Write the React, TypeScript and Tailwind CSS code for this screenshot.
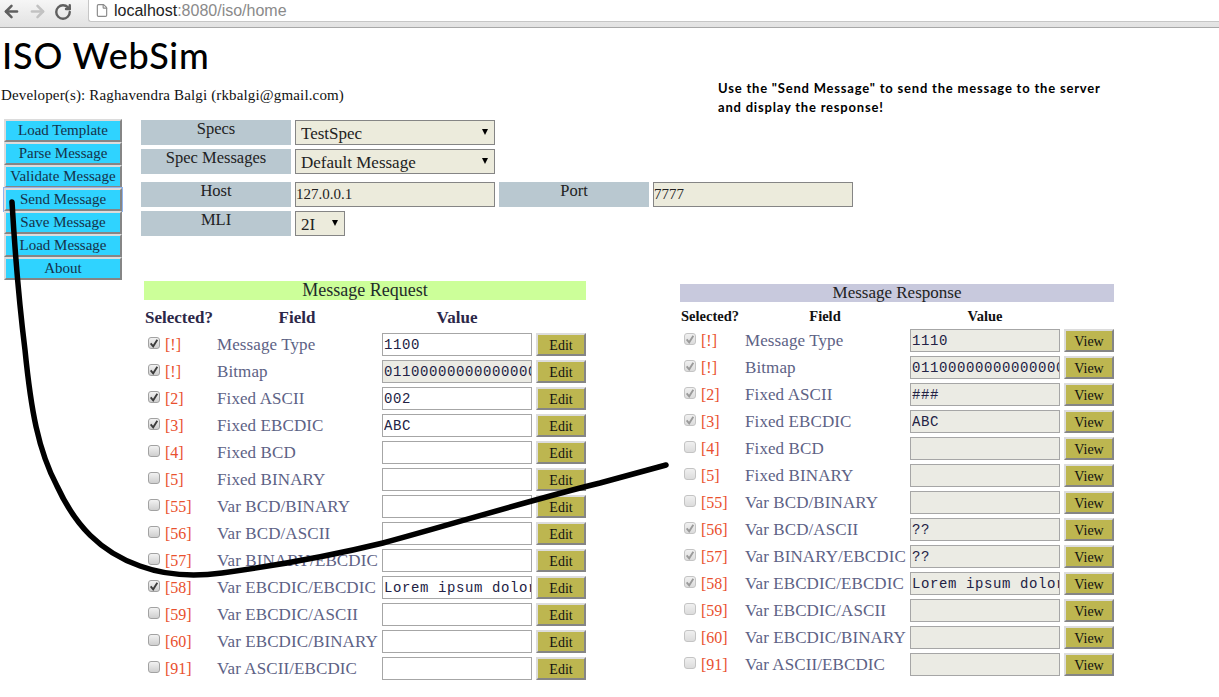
import { ArrowLeft, ArrowRight, RotateCw, File } from 'lucide-react';

const sideButtons = ['Load Template', 'Parse Message', 'Validate Message', 'Send Message', 'Save Message', 'Load Message', 'About'];

const fields = [
  { tag: '[!]', name: 'Message Type' },
  { tag: '[!]', name: 'Bitmap' },
  { tag: '[2]', name: 'Fixed ASCII' },
  { tag: '[3]', name: 'Fixed EBCDIC' },
  { tag: '[4]', name: 'Fixed BCD' },
  { tag: '[5]', name: 'Fixed BINARY' },
  { tag: '[55]', name: 'Var BCD/BINARY' },
  { tag: '[56]', name: 'Var BCD/ASCII' },
  { tag: '[57]', name: 'Var BINARY/EBCDIC' },
  { tag: '[58]', name: 'Var EBCDIC/EBCDIC' },
  { tag: '[59]', name: 'Var EBCDIC/ASCII' },
  { tag: '[60]', name: 'Var EBCDIC/BINARY' },
  { tag: '[91]', name: 'Var ASCII/EBCDIC' },
];

const bitmap = '0110000000000000000000000000000000000000';

const requestValues: Record<number, string> = { 0: '1100', 1: bitmap, 2: '002', 3: 'ABC', 9: 'Lorem ipsum dolor sit amet' };
const responseValues: Record<number, string> = { 0: '1110', 1: bitmap, 2: '###', 3: 'ABC', 7: '??', 8: '??', 9: 'Lorem ipsum dolor sit amet' };

function Box({ checked, disabled }: { checked: boolean; disabled?: boolean }) {
  return (
    <span
      className={`flex w-[12px] h-[12px] items-center justify-center rounded-[3px] border ${
        disabled
          ? 'border-[#c4c4c4] bg-gradient-to-b from-[#f0f0f0] to-[#dcdcdc]'
          : 'border-[#a2a2a2] bg-gradient-to-b from-[#f2f2f2] to-[#cfcfcf]'
      }`}
    >
      {checked && (
        <svg viewBox="0 0 12 12" className="w-[10px] h-[10px]">
          <path d="M2 6.5 L5 10 L10 2" fill="none" stroke={disabled ? '#9a9a9a' : '#3c3c3c'} strokeWidth="2.2" />
        </svg>
      )}
    </span>
  );
}

function Rows({ values, action, response }: { values: Record<number, string>; action: string; response?: boolean }) {
  return (
    <div className="flex flex-col gap-[4px]">
      {fields.map((f, i) => {
        const value = values[i] ?? '';
        const locked = response || i === 1;
        return (
          <div key={f.tag + f.name} className="flex h-[23px] items-center">
            <span className="w-[21px] pl-[4px] -mt-[3px]">
              <Box checked={value !== ''} disabled={response} />
            </span>
            <span className={`text-[#e9502e] text-[16px] mt-[1px] ${response ? 'w-[44px]' : 'w-[52px]'}`}>{f.tag}</span>
            <span className="w-[165px] text-[#5d6285] text-[17px] tracking-[0.1px] mt-[1px] whitespace-nowrap">{f.name}</span>
            <input
              readOnly
              value={value}
              className={`w-[150px] h-[23px] border border-[#a6a6a6] pl-[1px] text-[14px] tracking-[0.6px] text-[#222244] font-['Liberation_Mono',monospace] outline-none ${
                locked ? 'bg-[#ebebe4]' : 'bg-white'
              }`}
            />
            <button className="ml-[4px] w-[50px] h-[23px] border-2 border-t-[#dcdcdc] border-l-[#dcdcdc] border-r-[#858585] border-b-[#858585] bg-[#bdb650] text-[14px] text-[#111]">
              {action}
            </button>
          </div>
        );
      })}
    </div>
  );
}

function Select({ value, width }: { value: string; width: string }) {
  return (
    <div className={`relative h-[25px] ${width}`}>
      <select
        defaultValue={value}
        className="w-full h-full appearance-none border border-[#858585] bg-[#ecebdc] pl-[5px] text-[17px] text-[#222] outline-none rounded-none"
      >
        <option>{value}</option>
      </select>
      <span className="absolute right-[7px] top-[9px] w-0 h-0 border-x-[3px] border-x-transparent border-t-[6px] border-t-black" />
    </div>
  );
}

function Label({ children }: { children: string }) {
  return <div className="w-[150px] h-[25px] bg-[#b9c8d0] text-center text-[16.5px] leading-[18px] text-[#222]">{children}</div>;
}

export default function App() {
  return (
    <div className="relative h-[697px] w-[1219px] overflow-hidden bg-white font-['Liberation_Serif',serif] text-[#111]">
      <div className="flex h-[28px] items-start border-b border-[#a8a8a8] bg-gradient-to-b from-[#f6f6f6] to-[#e2e2e2] pt-[1px]">
        <div className="flex w-[88px] items-center pt-[1px] pl-[2px] gap-[7px]">
          <ArrowLeft className="w-[19px] h-[19px] text-[#5f5f5f]" strokeWidth={3.2} />
          <ArrowRight className="w-[19px] h-[19px] text-[#c2c2c2]" strokeWidth={3.2} />
          <RotateCw className="w-[18px] h-[18px] text-[#5f5f5f]" strokeWidth={3.2} />
        </div>
        <div className="flex h-[22px] flex-1 items-center -mt-[1px] rounded-bl-[3px] border-l border-b border-[#c6c6c6] bg-white pl-[6px] font-['Liberation_Sans',sans-serif] text-[16px]">
          <File className="w-[14px] h-[15px] text-[#8a8a8a]" />
          <span className="ml-[5px] text-[#222]">localhost</span>
          <span className="text-[#8a8a8a]">:8080/iso/home</span>
        </div>
      </div>

      <h1 className="pl-[2px] pt-[5px] h-[50px] text-[36px] leading-[44px] tracking-[0.8px] text-black font-['Lato',sans-serif] font-medium">ISO WebSim</h1>

      <div className="flex h-[42px]">
        <p className="w-[718px] pl-[1px] pt-[8px] text-[15px] leading-[18px] tracking-[0.15px] text-[#111]">Developer(s): Raghavendra Balgi (rkbalgi@gmail.com)</p>
        <p className="mt-[1px] w-[420px] font-['Lato',sans-serif] text-[13px] font-bold leading-[19px] tracking-[0.8px] text-black">
          Use the "Send Message" to send the message to the server
          <br />
          and display the response!
        </p>
      </div>

      <div className="flex -mt-[1px]">
        <div className="ml-[4px] flex w-[118px] flex-col">
          {sideButtons.map((b) => (
            <button
              key={b}
              className={`h-[23px] w-[118px] border-2 border-t-[#dcdcdc] border-l-[#dcdcdc] border-r-[#858585] border-b-[#858585] bg-[#2fd3ff] text-[15px] leading-[17px] text-[#16324a] whitespace-nowrap ${
                b === 'Send Message' ? 'outline outline-1 outline-[#8fb4ee]' : ''
              }`}
            >
              {b}
            </button>
          ))}
        </div>
        <div className="ml-[19px] mt-[1px] flex flex-col">
          <div className="flex gap-[4px]">
            <Label>Specs</Label>
            <Select value="TestSpec" width="w-[200px]" />
          </div>
          <div className="mt-[4px] flex gap-[4px]">
            <Label>Spec Messages</Label>
            <Select value="Default Message" width="w-[200px]" />
          </div>
          <div className="mt-[8px] flex gap-[4px]">
            <Label>Host</Label>
            <input readOnly value="127.0.0.1" className="h-[25px] w-[200px] border border-[#858585] bg-[#ecebdc] text-[15px] text-[#222] outline-none" />
            <Label>Port</Label>
            <input readOnly value="7777" className="h-[25px] w-[200px] border border-[#858585] bg-[#ecebdc] text-[15px] text-[#222] outline-none" />
          </div>
          <div className="mt-[4px] flex gap-[4px]">
            <Label>MLI</Label>
            <Select value="2I" width="w-[50px]" />
          </div>
        </div>
      </div>

      <div className="mt-[1px] flex items-start">
        <section className="ml-[144px] w-[442px]">
          <div className="h-[19px] bg-[#ccff99] text-center text-[18px] leading-[19px] text-[#1f2b2b]">Message Request</div>
          <div className="flex h-[33px] items-center pt-[3px] text-[#2c2748] text-[17px] font-semibold">
            <span className="w-[73px] pl-[1px] whitespace-nowrap">Selected?</span>
            <span className="w-[160px] text-center">Field</span>
            <span className="w-[160px] text-center">Value</span>
          </div>
          <Rows values={requestValues} action="Edit" />
        </section>
        <section className="ml-[94px] w-[434px]">
          <div className="mt-[3px] h-[18px] bg-[#c8c9dd] text-center text-[17px] leading-[18px] text-[#222]">Message Response</div>
          <div className="flex h-[27px] items-center pt-[2px] text-[#111] text-[14.5px] font-semibold">
            <span className="w-[65px] pl-[1px] whitespace-nowrap">Selected?</span>
            <span className="w-[160px] text-center">Field</span>
            <span className="w-[160px] text-center">Value</span>
          </div>
          <Rows values={responseValues} action="View" response />
        </section>
      </div>

      {/* hand drawn arrow across the page */}
      <svg className="absolute left-0 top-0 pointer-events-none" width="1219" height="697" viewBox="0 0 1219 697">
        <path
          d="M12 202 C16 270 20 310 25 350 C31 410 38 450 57 486 C75 525 100 552 140 566 C170 577 200 576 222 573 C280 565 330 556 383 543 C450 525 530 500 600 483 L666 465"
          fill="none"
          stroke="#000"
          strokeWidth="5.5"
          strokeLinecap="round"
        />
      </svg>
    </div>
  );
}
